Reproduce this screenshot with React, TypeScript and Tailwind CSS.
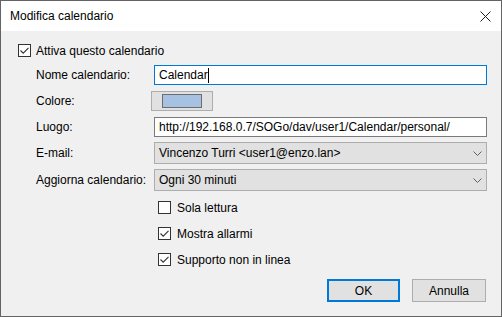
import React from "react";

const font = { fontFamily: '"Liberation Sans", Arial, sans-serif' };

function Check({ checked }: { checked: boolean }) {
  return (
    <div className="w-[13px] h-[13px] border border-[#333333] bg-white flex items-center justify-center shrink-0">
      {checked && (
        <svg width="11" height="11" viewBox="0 0 11 11">
          <path d="M1.5 5.5 L4.2 8.2 L9.5 2.8" fill="none" stroke="#333333" strokeWidth="1.1" />
        </svg>
      )}
    </div>
  );
}

function Chevron() {
  return (
    <svg width="9" height="5" viewBox="0 0 9 5" className="shrink-0">
      <path d="M0.5 0.5 L4.5 4.5 L8.5 0.5" fill="none" stroke="#606060" strokeWidth="1" />
    </svg>
  );
}

function Row({ label, children, h }: { label: string; children: React.ReactNode; h: string }) {
  return (
    <div className={`flex items-center ${h}`}>
      <div className="w-[118px] pl-[35px] box-content shrink-0">{label}</div>
      <div className="w-[333px]">{children}</div>
    </div>
  );
}

export default function App() {
  return (
    <div
      className="w-[502px] h-[317px] border border-[#646464] bg-[#f0f0f0] flex flex-col text-[12px] text-black leading-none"
      style={font}
    >
      <div className="h-[30px] bg-white flex items-center justify-between pl-[9px] pr-[10px] shrink-0">
        <span className="text-[12px] pb-[1px]">Modifica calendario</span>
        <svg width="11" height="11" viewBox="0 0 11 11" className="mr-[0px]">
          <path d="M0.5 0.5 L10.5 10.5 M10.5 0.5 L0.5 10.5" stroke="#222222" strokeWidth="1" />
        </svg>
      </div>
      <div className="flex flex-col">
        <div className="flex items-center h-[13px] mt-[13px] pl-[17px] gap-[5px]">
          <Check checked />
          <span>Attiva questo calendario</span>
        </div>
        <div className="mt-[8px]">
          <Row label="Nome calendario:" h="h-[20px]">
            <div className="h-[20px] border border-[#0078d7] bg-white flex items-center pl-[4px]">
              <span>Calendar</span>
              <span className="w-[1px] h-[15px] bg-black ml-[0px]" />
            </div>
          </Row>
        </div>
        <div className="mt-[6px]">
          <Row label="Colore:" h="h-[20px]">
            <div className="w-[62px] h-[20px] -ml-[3px] border border-[#adadad] bg-[#e1e1e1] flex items-center justify-center">
              <div className="w-[40px] h-[14px] border border-[#6d6d6d] bg-[#a6c1e1]" />
            </div>
          </Row>
        </div>
        <div className="mt-[6px]">
          <Row label="Luogo:" h="h-[20px]">
            <div className="h-[20px] border border-[#7a7a7a] bg-white flex items-center pl-[4px]">
              http://192.168.0.7/SOGo/dav/user1/Calendar/personal/
            </div>
          </Row>
        </div>
        <div className="mt-[5px]">
          <Row label="E-mail:" h="h-[22px]">
            <div className="h-[22px] border border-[#adadad] bg-[#e1e1e1] flex items-center justify-between pl-[4px] pr-[4px]">
              <span>Vincenzo Turri &lt;user1@enzo.lan&gt;</span>
              <Chevron />
            </div>
          </Row>
        </div>
        <div className="mt-[5px]">
          <Row label="Aggiorna calendario:" h="h-[22px]">
            <div className="h-[22px] border border-[#adadad] bg-[#e1e1e1] flex items-center justify-between pl-[4px] pr-[4px]">
              <span>Ogni 30 minuti</span>
              <Chevron />
            </div>
          </Row>
        </div>
        <div className="flex items-center h-[13px] mt-[10px] pl-[157px] gap-[6px]">
          <Check checked={false} />
          <span>Sola lettura</span>
        </div>
        <div className="flex items-center h-[13px] mt-[13px] pl-[157px] gap-[6px]">
          <Check checked />
          <span>Mostra allarmi</span>
        </div>
        <div className="flex items-center h-[13px] mt-[13px] pl-[157px] gap-[6px]">
          <Check checked />
          <span>Supporto non in linea</span>
        </div>
        <div className="flex justify-end gap-[12px] mt-[13px] pr-[15px]">
          <div className="w-[73px] h-[23px] border-2 border-[#0078d7] bg-[#e1e1e1] flex items-center justify-center">
            OK
          </div>
          <div className="w-[74px] h-[23px] border border-[#adadad] bg-[#e1e1e1] flex items-center justify-center">
            Annulla
          </div>
        </div>
      </div>
    </div>
  );
}
